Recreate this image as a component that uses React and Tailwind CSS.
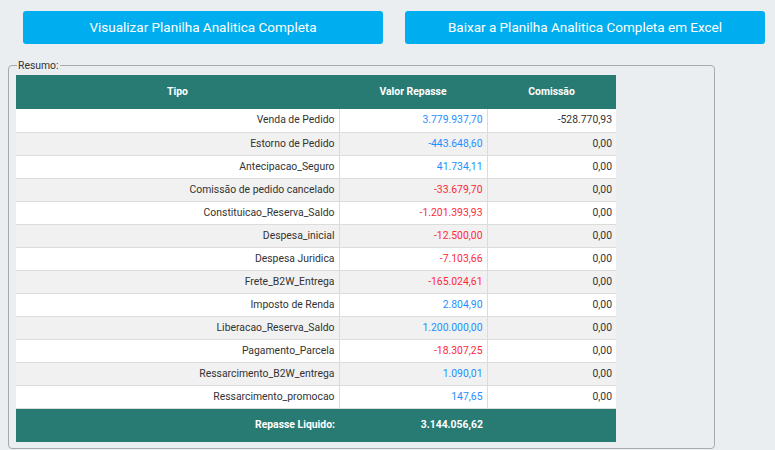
import React from "react";

const rows = [
  ["Venda de Pedido", "3.779.937,70", "b", "-528.770,93"],
  ["Estorno de Pedido", "-443.648,60", "b", "0,00"],
  ["Antecipacao_Seguro", "41.734,11", "b", "0,00"],
  ["Comissão de pedido cancelado", "-33.679,70", "r", "0,00"],
  ["Constituicao_Reserva_Saldo", "-1.201.393,93", "r", "0,00"],
  ["Despesa_inicial", "-12.500,00", "r", "0,00"],
  ["Despesa Juridica", "-7.103,66", "r", "0,00"],
  ["Frete_B2W_Entrega", "-165.024,61", "r", "0,00"],
  ["Imposto de Renda", "2.804,90", "b", "0,00"],
  ["Liberacao_Reserva_Saldo", "1.200.000,00", "b", "0,00"],
  ["Pagamento_Parcela", "-18.307,25", "r", "0,00"],
  ["Ressarcimento_B2W_entrega", "1.090,01", "b", "0,00"],
  ["Ressarcimento_promocao", "147,65", "b", "0,00"],
];

export default function App() {
  return (
    <div className="w-[775px] h-[450px] bg-[#ebeef1] overflow-hidden font-['Roboto',sans-serif] text-[#333]">
      <div className="flex pt-[11px] pl-[23px] gap-[22px]">
        <button className="w-[360px] h-[33px] bg-[#00aeef] rounded-[3px] text-white text-[13.5px]">
          Visualizar Planilha Analitica Completa
        </button>
        <button className="w-[360px] h-[33px] bg-[#00aeef] rounded-[3px] text-white text-[13.5px]">
          Baixar a Planilha Analitica Completa em Excel
        </button>
      </div>
      <fieldset className="ml-[8px] mt-[15px] w-[707px] border border-[#aaa] rounded-[4px] px-[7px] pb-[6px] pt-[3px]">
        <legend className="text-[10.4px] leading-[13px] px-[1px] ml-[1px] text-[#333]">Resumo:</legend>
        <table className="w-[600px] border-collapse text-[10.4px]">
          <colgroup>
            <col className="w-[323px]" />
            <col className="w-[148px]" />
            <col className="w-[129px]" />
          </colgroup>
          <thead>
            <tr className="bg-[#287b73] text-white h-[34px] font-bold">
              <th className="text-center font-bold">Tipo</th>
              <th className="text-center font-bold">Valor Repasse</th>
              <th className="text-center font-bold">Comissão</th>
            </tr>
          </thead>
          <tbody>
            {rows.map((r, i) => (
              <tr key={i} className={`h-[23px] ${i % 2 ? "bg-[#f1f1f1]" : "bg-white"}`}>
                <td className="text-right pr-[4px] border-b border-r border-[#dcdcdc]">{r[0]}</td>
                <td className={`text-right pr-[4px] border-b border-r border-[#dcdcdc] ${r[2] === "b" ? "text-[#1e90ff]" : "text-[#ff2a3a]"}`}>{r[1]}</td>
                <td className="text-right pr-[4px] border-b border-[#dcdcdc]">{r[3]}</td>
              </tr>
            ))}
          </tbody>
          <tfoot>
            <tr className="bg-[#287b73] text-white h-[34px] font-bold">
              <td className="text-right pr-[4px]">Repasse Liquido:</td>
              <td className="text-right pr-[4px]">3.144.056,62</td>
              <td></td>
            </tr>
          </tfoot>
        </table>
      </fieldset>
    </div>
  );
}
